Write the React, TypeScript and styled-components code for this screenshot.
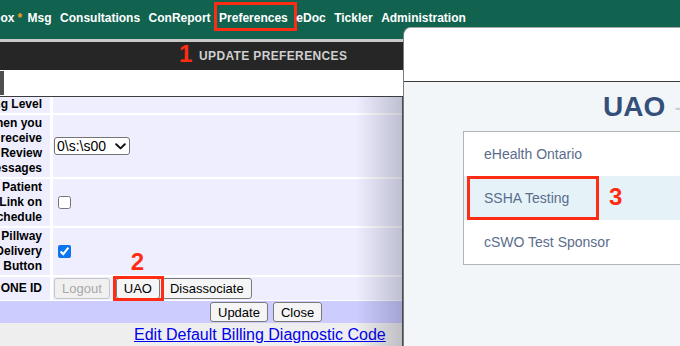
import React from "react";
import styled, { createGlobalStyle } from "styled-components";

const RED = "#ff2c14";
const FONT = `"Liberation Sans", Arial, Helvetica, sans-serif`;

const GlobalStyle = createGlobalStyle`
  html, body { margin: 0; padding: 0; }
  body {
    width: 680px;
    height: 346px;
    overflow: hidden;
    background: #ffffff;
    font-family: ${FONT};
  }
  #root { width: 680px; height: 346px; }
`;

const Page = styled.div`
  position: relative;
  width: 680px;
  height: 346px;
  overflow: hidden;
  display: flex;
  flex-direction: column;
`;

/* ---------- top navigation ---------- */
const NavBar = styled.nav`
  flex: none;
  height: 39px;
  box-sizing: border-box;
  padding-top: 11px;
  background: #11634f;
`;

const NavList = styled.div`
  display: flex;
  align-items: flex-start;
  gap: 8.5px;
  margin-left: -17.6px;
`;

const NavItem = styled.span`
  position: relative;
  color: #ffffff;
  font: 700 12px/14px ${FONT};
  white-space: nowrap;
`;

const NewStar = styled.span`
  color: #f5a21c;
  margin-left: 3px;
  margin-right: -3px;
`;

const NavRule = styled.div`
  flex: none;
  height: 3px;
  background: #c9c9c9;
`;

const TitleBar = styled.div`
  flex: none;
  position: relative;
  height: 28px;
  display: flex;
  align-items: center;
  padding-left: 199px;
  background: #262626;
`;

const TitleText = styled.span`
  color: #d0d0d0;
  font: 700 12px/14px ${FONT};
  letter-spacing: 0.36px;
`;

/* ---------- annotations ---------- */
const Marker = styled.span<{ $left: number; $top: number }>`
  position: absolute;
  left: ${(p) => p.$left}px;
  top: ${(p) => p.$top}px;
  color: ${RED};
  font: 700 24px/24px ${FONT};
  pointer-events: none;
`;

const Callout = styled.span<{ $l: number; $t: number; $r: number; $b: number }>`
  position: absolute;
  left: ${(p) => p.$l}px;
  top: ${(p) => p.$t}px;
  right: ${(p) => p.$r}px;
  bottom: ${(p) => p.$b}px;
  border: 3px solid ${RED};
  pointer-events: none;
`;

const Annotated = styled.span`
  position: relative;
  display: inline-flex;
`;

/* ---------- left preferences page ---------- */
const Body = styled.div`
  flex: 1;
  display: flex;
  min-height: 0;
`;

const LeftPane = styled.div`
  width: 403px;
  flex: none;
  display: flex;
  flex-direction: column;
`;

const ToolStrip = styled.div`
  flex: none;
  height: 27px;
  box-sizing: border-box;
  border-bottom: 1px solid #3d3d3d;
  background: #ffffff;
  display: flex;
  align-items: flex-start;
`;

const ToolStub = styled.div`
  width: 4px;
  height: 24px;
  margin-top: 1px;
  background: #4e4e4e;
`;

const Sheet = styled.div`
  flex: 1;
  position: relative;
  display: flex;
  flex-direction: column;
  border-right: 1px solid #4a4a4a;
  background: #eeeeee;
  overflow: hidden;
`;

const Shade = styled.div`
  position: absolute;
  top: 0;
  bottom: 0;
  right: 0;
  width: 46px;
  background: linear-gradient(to right, rgba(40, 40, 70, 0), rgba(40, 40, 70, 0.24));
  pointer-events: none;
`;

const PrefGrid = styled.div`
  display: grid;
  grid-template-columns: 180px 1fr;
  column-gap: 3px;
  row-gap: 2px;
  margin-left: -130px;
  background: #ffffff;
`;

const LabelCell = styled.div<{ $first?: boolean }>`
  background: #eeeeff;
  padding: ${(p) => (p.$first ? "0 8px 1px 0" : "1px 8px 1px 0")};
  display: flex;
  flex-direction: column;
  align-items: flex-end;
  justify-content: center;
  color: #000000;
  font: 700 12px/15px ${FONT};
  white-space: nowrap;
`;

const ValueCell = styled.div`
  background: #eeeeff;
  padding: 1px;
  display: flex;
  align-items: center;
`;

const SelectWrap = styled.span`
  position: relative;
  display: inline-flex;
`;

const Select = styled.select`
  appearance: none;
  -webkit-appearance: none;
  width: 76px;
  height: 18px;
  box-sizing: border-box;
  padding: 0 0 0 2px;
  border: 1px solid #747474;
  border-radius: 3px;
  background: #ffffff;
  color: #000000;
  font: 14px/16px ${FONT};
`;

const Chevron = styled.svg`
  position: absolute;
  right: 4px;
  top: 6px;
  pointer-events: none;
`;

const Check = styled.input`
  width: 13px;
  height: 13px;
  margin: 3px 3px 3px 4px;
  accent-color: #0b74ef;
`;

const Btn = styled.button<{ $after?: number; $before?: number }>`
  height: 21px;
  box-sizing: border-box;
  padding: 0 7px;
  margin: 0 ${(p) => p.$after ?? 0}px 0 ${(p) => p.$before ?? 0}px;
  border: 1px solid #7b7b7b;
  border-radius: 3px;
  background: #f5f5f5;
  color: #000000;
  font: 13px/17px ${FONT};
  white-space: nowrap;
  &:disabled {
    color: #a8a8a8;
    border-color: #c6c6c6;
    background: #f0f0f0;
  }
`;

const FooterBar = styled.div`
  flex: none;
  height: 23px;
  box-sizing: border-box;
  border-top: 1px solid #ffffff;
  background: #ccccff;
  display: flex;
  align-items: center;
  gap: 5px;
  padding-left: 210px;
`;

const FooterBtn = styled(Btn)`
  height: 20px;
`;

const LinkBar = styled.div`
  flex: 1;
  padding: 3px 0 0 134px;
  font: 16px/18px ${FONT};
  white-space: nowrap;
`;

const Link = styled.a`
  color: #0000ee;
  text-decoration: underline;
`;

/* ---------- UAO window ---------- */
const Window = styled.section`
  position: absolute;
  left: 403px;
  top: 27px;
  right: 0;
  bottom: 0;
  display: flex;
  flex-direction: column;
  border-left: 1px solid #7c7c7c;
  border-top: 1px solid #a8a8a8;
  border-top-left-radius: 8px;
  background: #f3f6f9;
  overflow: hidden;
`;

const WindowHeader = styled.div`
  flex: none;
  height: 54px;
  box-sizing: border-box;
  border-bottom: 1px solid #3a3a3a;
  background: #ffffff;
`;

const WindowTitle = styled.h1`
  margin: 9px 0 0 0;
  padding-left: 199px;
  color: #34507a;
  font: 700 28px/32px ${FONT};
  white-space: nowrap;
`;

const TitleTail = styled.span`
  margin-left: 9px;
  color: #c9d0d9;
  font-weight: 400;
`;

const ListBox = styled.ul`
  list-style: none;
  margin: 8px 0 0 59px;
  padding: 0;
  width: 300px;
  border: 1px solid #b3b3b3;
  background: #ffffff;
`;

const ListItem = styled.li<{ $selected?: boolean }>`
  position: relative;
  height: 44px;
  display: flex;
  align-items: center;
  padding-left: 20px;
  background: ${(p) => (p.$selected ? "#e5f3f9" : "#ffffff")};
  color: #5a6d8b;
  font: 14px/16px ${FONT};
  white-space: nowrap;
`;

type Row = { lines: string[]; first?: boolean; value: React.ReactNode };

const Label: React.FC<{ lines: string[]; first?: boolean }> = ({ lines, first }) => (
  <LabelCell $first={first}>
    {lines.map((l) => (
      <div key={l}>{l}</div>
    ))}
  </LabelCell>
);

export default function App() {
  const navItems = ["Msg", "Consultations", "ConReport", "Preferences", "eDoc", "Tickler", "Administration"];

  const rows: Row[] = [
    { lines: ["Tickler Warning Level"], first: true, value: null },
    {
      lines: ["Notify me when you", "first receive", "New Review", "Messages"],
      value: (
        <SelectWrap>
          <Select defaultValue="0">
            <option value="0">0\s:\s00</option>
          </Select>
          <Chevron width="11" height="7" viewBox="0 0 11 7">
            <polyline points="1.2,1.2 5.5,5.4 9.8,1.2" fill="none" stroke="#111" strokeWidth="2" strokeLinecap="round" strokeLinejoin="round" />
          </Chevron>
        </SelectWrap>
      ),
    },
    { lines: ["Show Patient", "Link on", "Schedule"], value: <Check type="checkbox" /> },
    { lines: ["Enable Pillway", "Delivery", "Button"], value: <Check type="checkbox" defaultChecked /> },
    {
      lines: ["ONE ID"],
      value: (
        <>
          <Btn disabled $after={6}>Logout</Btn>
          <Annotated>
            <Btn>UAO</Btn>
            <Callout $l={-3} $t={-2} $r={-4} $b={-2} />
            <Marker $left={15} $top={-28}>2</Marker>
          </Annotated>
          <Btn $before={2}>Disassociate</Btn>
        </>
      ),
    },
  ];

  return (
    <Page>
      <GlobalStyle />
      <NavBar>
        <NavList>
          <NavItem>
            Inbox<NewStar>*</NewStar>
          </NavItem>
          {navItems.map((n) => (
            <NavItem key={n}>
              {n}
              {n === "Preferences" && <Callout $l={-5} $t={-9} $r={-9} $b={-6} />}
            </NavItem>
          ))}
        </NavList>
      </NavBar>
      <NavRule />
      <TitleBar>
        <Marker $left={179} $top={0}>1</Marker>
        <TitleText>UPDATE PREFERENCES</TitleText>
      </TitleBar>
      <Body>
        <LeftPane>
          <ToolStrip>
            <ToolStub />
          </ToolStrip>
          <Sheet>
            <PrefGrid>
              {rows.map((r, i) => (
                <React.Fragment key={i}>
                  <Label lines={r.lines} first={r.first} />
                  <ValueCell>{r.value}</ValueCell>
                </React.Fragment>
              ))}
            </PrefGrid>
            <FooterBar>
              <FooterBtn>Update</FooterBtn>
              <FooterBtn>Close</FooterBtn>
            </FooterBar>
            <LinkBar>
              <Link href="#">Edit Default Billing Diagnostic Code</Link>
            </LinkBar>
            <Shade />
          </Sheet>
        </LeftPane>
      </Body>
      <Window>
        <WindowHeader />
        <WindowTitle>
          UAO<TitleTail>-</TitleTail>
        </WindowTitle>
        <ListBox>
          <ListItem>eHealth Ontario</ListItem>
          <ListItem $selected>
            SSHA Testing
            <Callout $l={3} $t={0} $r={165} $b={0} />
            <Marker $left={145} $top={9}>3</Marker>
          </ListItem>
          <ListItem>cSWO Test Sponsor</ListItem>
        </ListBox>
      </Window>
    </Page>
  );
}
